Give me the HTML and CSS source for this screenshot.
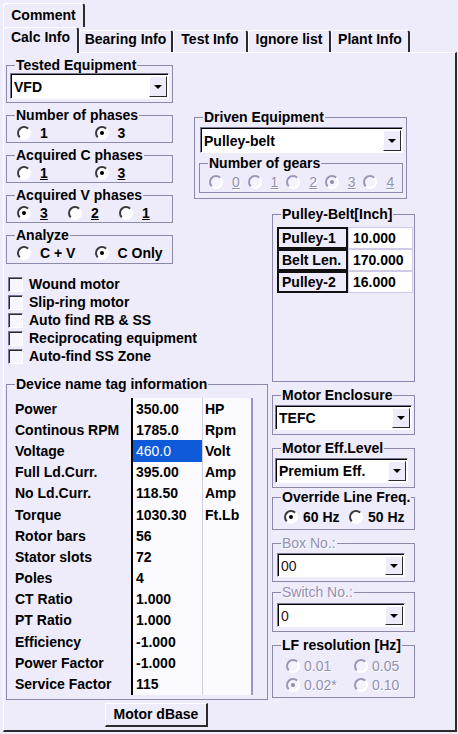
FILE: index.html
```html
<!DOCTYPE html>
<html lang="en">
<head>
    <meta charset="UTF-8">
    <title>Calc Info</title>
    <link rel="stylesheet" href="styles.css">
</head>
<body>

    <!-- Tab strip -->
    <div class="tabs">
        <div class="tab-row">
            <div class="tab tab-comment">Comment</div>
        </div>
        <div class="tab-row tab-row-main">
            <div class="tab active w-calc">Calc Info</div>
            <div class="tab w-bearing">Bearing Info</div>
            <div class="tab w-test">Test Info</div>
            <div class="tab w-ignore">Ignore list</div>
            <div class="tab w-plant">Plant Info</div>
        </div>
    </div>

    <div class="panel">

        <!-- Left stack -->
        <div class="stack">
            <fieldset class="group">
                <legend>Tested Equipment</legend>
                <div class="gbody b-tested">
                    <div class="combo"><span class="combo-text">VFD</span><span class="combo-btn"><i class="arrow"></i></span></div>
                </div>
            </fieldset>

            <fieldset class="group spaced">
                <legend>Number of phases</legend>
                <div class="opts">
                    <span class="opt w78"><i class="radio"></i>1</span>
                    <span class="opt w78"><i class="radio on"></i>3</span>
                </div>
            </fieldset>

            <fieldset class="group spaced">
                <legend>Acquired C phases</legend>
                <div class="opts">
                    <span class="opt w78"><i class="radio"></i><u>1</u></span>
                    <span class="opt w78"><i class="radio on"></i><u>3</u></span>
                </div>
            </fieldset>

            <fieldset class="group spaced">
                <legend>Acquired V phases</legend>
                <div class="opts">
                    <span class="opt w51"><i class="radio on"></i><u>3</u></span>
                    <span class="opt w51"><i class="radio"></i><u>2</u></span>
                    <span class="opt w51"><i class="radio"></i><u>1</u></span>
                </div>
            </fieldset>

            <fieldset class="group spaced">
                <legend>Analyze</legend>
                <div class="opts tall">
                    <span class="opt w79"><i class="radio"></i>C + V</span>
                    <span class="opt w79"><i class="radio on"></i>C Only</span>
                </div>
            </fieldset>

            <div class="checks">
                <div class="check-row"><i class="cbox"></i>Wound motor</div>
                <div class="check-row"><i class="cbox"></i>Slip-ring motor</div>
                <div class="check-row"><i class="cbox"></i>Auto find RB &amp; SS</div>
                <div class="check-row"><i class="cbox"></i>Reciprocating equipment</div>
                <div class="check-row"><i class="cbox"></i>Auto-find SS Zone</div>
            </div>
        </div>

        <!-- Driven equipment -->
        <fieldset class="group driven">
            <legend>Driven Equipment</legend>
            <div class="gbody b-driven">
                <div class="combo c-driven"><span class="combo-text">Pulley-belt</span><span class="combo-btn"><i class="arrow"></i></span></div>
                <fieldset class="group gears">
                    <legend>Number of gears</legend>
                    <div class="opts gear-opts dis">
                        <span class="opt w39"><i class="radio off"></i><u>0</u></span>
                        <span class="opt w39"><i class="radio off"></i><u>1</u></span>
                        <span class="opt w39"><i class="radio off"></i><u>2</u></span>
                        <span class="opt w39"><i class="radio off on"></i><u>3</u></span>
                        <span class="opt w39"><i class="radio off"></i><u>4</u></span>
                    </div>
                </fieldset>
            </div>
        </fieldset>

        <!-- Device name tag -->
        <div class="device">
            <fieldset class="group">
                <legend>Device name tag information</legend>
                <div class="gbody b-device">
                    <table class="tag-table">
                        <tr><td class="c-name">Power</td><td class="c-val">350.00</td><td class="c-unit">HP</td></tr>
                        <tr><td class="c-name">Continous RPM</td><td class="c-val">1785.0</td><td class="c-unit">Rpm</td></tr>
                        <tr><td class="c-name">Voltage</td><td class="c-val sel">460.0</td><td class="c-unit">Volt</td></tr>
                        <tr><td class="c-name">Full Ld.Curr.</td><td class="c-val">395.00</td><td class="c-unit">Amp</td></tr>
                        <tr><td class="c-name">No Ld.Curr.</td><td class="c-val">118.50</td><td class="c-unit">Amp</td></tr>
                        <tr><td class="c-name">Torque</td><td class="c-val">1030.30</td><td class="c-unit">Ft.Lb</td></tr>
                        <tr><td class="c-name">Rotor bars</td><td class="c-val">56</td><td class="c-unit"></td></tr>
                        <tr><td class="c-name">Stator slots</td><td class="c-val">72</td><td class="c-unit"></td></tr>
                        <tr><td class="c-name">Poles</td><td class="c-val">4</td><td class="c-unit"></td></tr>
                        <tr><td class="c-name">CT Ratio</td><td class="c-val">1.000</td><td class="c-unit"></td></tr>
                        <tr><td class="c-name">PT Ratio</td><td class="c-val">1.000</td><td class="c-unit"></td></tr>
                        <tr><td class="c-name">Efficiency</td><td class="c-val">-1.000</td><td class="c-unit"></td></tr>
                        <tr><td class="c-name">Power Factor</td><td class="c-val">-1.000</td><td class="c-unit"></td></tr>
                        <tr><td class="c-name">Service Factor</td><td class="c-val">115</td><td class="c-unit"></td></tr>
                    </table>
                </div>
            </fieldset>
            <button type="button" class="btn">Motor dBase</button>
        </div>

        <!-- Right stack -->
        <div class="right">
            <fieldset class="group pulley">
                <legend>Pulley-Belt[Inch]</legend>
                <div class="gbody b-pulley">
                    <table class="pulley-table">
                        <tr><td class="p-name">Pulley-1</td><td class="p-val">10.000</td></tr>
                        <tr><td class="p-name">Belt Len.</td><td class="p-val">170.000</td></tr>
                        <tr><td class="p-name">Pulley-2</td><td class="p-val">16.000</td></tr>
                    </table>
                </div>
            </fieldset>

            <fieldset class="group r-gap">
                <legend>Motor Enclosure</legend>
                <div class="gbody b-motor">
                    <div class="combo c-small"><span class="combo-text">TEFC</span><span class="combo-btn"><i class="arrow"></i></span></div>
                </div>
            </fieldset>

            <fieldset class="group r-gap">
                <legend>Motor Eff.Level</legend>
                <div class="gbody b-motor">
                    <div class="combo c-small c-eff"><span class="combo-text">Premium Eff.</span><span class="combo-btn"><i class="arrow"></i></span></div>
                </div>
            </fieldset>

            <fieldset class="group r-gap1">
                <legend>Override Line Freq.</legend>
                <div class="opts freq-opts">
                    <span class="opt w65"><i class="radio on"></i>60 Hz</span>
                    <span class="opt"><i class="radio"></i>50 Hz</span>
                </div>
            </fieldset>

            <fieldset class="group r-gap">
                <legend class="dis">Box No.:</legend>
                <div class="gbody b-box">
                    <div class="combo c-box"><span class="combo-text thin">00</span><span class="combo-btn"><i class="arrow"></i></span></div>
                </div>
            </fieldset>

            <fieldset class="group r-gap2">
                <legend class="dis">Switch No.:</legend>
                <div class="gbody b-box b-switch">
                    <div class="combo c-box"><span class="combo-text thin">0</span><span class="combo-btn"><i class="arrow"></i></span></div>
                </div>
            </fieldset>

            <fieldset class="group r-gap">
                <legend>LF resolution [Hz]</legend>
                <div class="lf-grid dis">
                    <span class="opt"><i class="radio off"></i>0.01</span>
                    <span class="opt"><i class="radio off"></i>0.05</span>
                    <span class="opt"><i class="radio off on"></i>0.02*</span>
                    <span class="opt"><i class="radio off"></i>0.10</span>
                </div>
            </fieldset>
        </div>

    </div>

</body>
</html>
```

FILE: styles.css
```css
/* Base */
* {
    box-sizing: border-box;
}

body {
    margin: 0;
    width: 458px;
    height: 734px;
    overflow: hidden;
    background: #eeebfb;
    color: #000;
    font-family: "Liberation Sans", Arial, sans-serif;
    font-weight: bold;
    font-size: 14px;
    line-height: 16px;
}

u {
    text-decoration: underline;
}

/* Tabs */
.tabs {
    padding: 3px 0 0 3px;
}

.tab-row {
    display: flex;
    align-items: flex-end;
}

.tab-row-main {
    height: 25px;
}

.tab {
    height: 22px;
    padding-top: 0;
    text-align: center;
    white-space: nowrap;
    border-top: 1px solid #fff;
    border-left: 1px solid #fff;
    border-right: 2px solid #2b2b2b;
    border-radius: 3px 3px 0 0;
}

.tab-comment {
    width: 82px;
    height: 24px;
    padding-top: 3px;
}

.tab.active {
    position: relative;
    z-index: 1;
    height: 26px;
    padding-top: 1px;
    margin-bottom: -1px;
    background: #eeebfb;
}

.w-calc { width: 76px; }
.w-bearing { width: 94px; }
.w-test { width: 75px; }
.w-ignore { width: 83px; }
.w-plant { width: 79px; }

/* Panel */
.panel {
    margin-left: 3px;
    width: 454px;
    height: 680px;
    padding: 4px 0 0 2px;
    border-top: 1px solid #fff;
    border-left: 1px solid #fff;
    border-right: 2px solid #2b2b2b;
    border-bottom: 2px solid #2b2b2b;
    display: grid;
    grid-template-columns: 167px 21px 74px 4px 144px;
    grid-template-rows: 143px 176px auto;
    grid-template-areas:
        "stack . driven driven driven"
        "stack . . . right"
        "device device device . right";
    align-items: start;
}

/* Group boxes */
.group {
    margin: 0;
    padding: 0;
    min-width: 0;
    border: 1px solid #8d89ad;
}

.group legend {
    margin-left: 8px;
    padding: 0 1px;
    line-height: 16px;
    white-space: nowrap;
}

.stack {
    grid-area: stack;
    width: 167px;
}

.group.driven {
    grid-area: driven;
    width: 213px;
    margin-top: 52px;
}

.device {
    grid-area: device;
}

.right {
    grid-area: right;
    width: 143px;
}

.spaced {
    margin-top: 4px;
}

.b-tested {
    padding: 0 3px 3px;
}

.b-driven {
    padding: 2px 3px 5px 4px;
}

.c-driven {
    margin-left: 1px;
}

.gears {
    margin-top: 2px;
}

/* Combo boxes */
.combo {
    display: flex;
    align-items: center;
    height: 26px;
    padding-left: 3px;
    background: #fff;
    border: 1px solid;
    border-color: #7a7894 #fff #fff #7a7894;
    box-shadow: inset 1px 1px 0 #000;
}

.combo-text {
    flex: 1;
    white-space: nowrap;
    overflow: hidden;
    padding-top: 1px;
}

.combo-text.thin {
    font-weight: normal;
    color: #2a1428;
}

.combo-btn {
    align-self: stretch;
    width: 18px;
    margin: 2px 1px 1px 0;
    display: flex;
    align-items: center;
    justify-content: center;
    background: #eeebfb;
    border: 1px solid;
    border-color: #fff #2b2b2b #2b2b2b #fff;
}

.arrow {
    width: 0;
    height: 0;
    border-left: 4px solid transparent;
    border-right: 4px solid transparent;
    border-top: 4px solid #000;
}

.c-small {
    height: 25px;
}

.c-eff {
    width: 133px;
}

.c-box {
    width: 128px;
    height: 24px;
}

/* Radio buttons */
.opts {
    display: flex;
    align-items: center;
    height: 19px;
    padding-left: 10px;
}

.opts.tall {
    height: 20px;
}

.opt {
    display: inline-flex;
    align-items: center;
    white-space: nowrap;
}

.w78 { width: 78px; }
.w79 { width: 79px; }
.w51 { width: 51px; }
.w39 { width: 39px; }
.w65 { width: 65px; }

.radio {
    position: relative;
    flex: none;
    width: 14px;
    height: 14px;
    margin-right: 9px;
    border-radius: 50%;
    border: 2px solid;
    border-color: #3a3a3a #fff #fff #3a3a3a;
    background: #fff;
}

.radio.on::after {
    content: "";
    position: absolute;
    left: 3px;
    top: 3px;
    width: 4px;
    height: 4px;
    border-radius: 50%;
    background: #000;
}

.radio.off {
    border-color: #9a96b4 #fff #fff #9a96b4;
    background: #f4f2fd;
}

.radio.off.on::after {
    background: #8f8bab;
}

.dis {
    color: #9490b0;
    font-weight: normal;
    text-shadow: 1px 1px 0 #fff;
}

.gear-opts {
    height: 21px;
    padding-left: 9px;
}

.gear-opts .radio {
    margin-right: 9px;
}

.freq-opts {
    height: 23px;
    padding-left: 11px;
    margin-bottom: 1px;
}

.freq-opts .radio {
    margin-right: 5px;
}

.lf-grid {
    display: grid;
    grid-template-columns: 68px 60px;
    grid-auto-rows: 19px;
    align-items: center;
    padding: 3px 0 3px 13px;
}

.lf-grid .radio {
    margin-right: 4px;
}

/* Checkboxes */
.checks {
    margin-top: 11px;
    padding-left: 2px;
}

.check-row {
    display: flex;
    align-items: center;
    height: 18px;
    white-space: nowrap;
}

.cbox {
    flex: none;
    width: 15px;
    height: 15px;
    margin-right: 6px;
    background: #f7f6fe;
    border: 1px solid;
    border-color: #7a7894 #fff #fff #7a7894;
    box-shadow: inset 1px 1px 0 #2b2b2b;
}

/* Device name tag table */
.b-device {
    padding: 6px 0 4px 6px;
}

.tag-table {
    width: 240px;
    border-collapse: separate;
    border-spacing: 0;
    table-layout: fixed;
}

.tag-table tr {
    height: 21.2px;
}

.tag-table td {
    padding: 0;
    white-space: nowrap;
}

.c-name {
    width: 118px;
    padding-left: 2px !important;
}

.c-val {
    width: 71px;
    padding-left: 3px !important;
    background: #fbfaff;
    border-left: 2px solid #000;
}

.c-val.sel {
    background: #0f5ad8;
    color: #fff;
    font-weight: normal;
}

.c-unit {
    width: 51px;
    padding-left: 2px !important;
    background: #fbfaff;
    border-left: 1px solid #cfcde2;
    border-right: 2px solid #9896c8;
}

.btn {
    display: block;
    margin: 3px 0 0 99px;
    width: 103px;
    height: 24px;
    padding: 0;
    font: inherit;
    color: #000;
    background: #eeebfb;
    border-top: 1px solid #fff;
    border-left: 1px solid #fff;
    border-right: 2px solid #2b2b2b;
    border-bottom: 2px solid #2b2b2b;
}

/* Right column */
.group.pulley {
    margin-top: 6px;
}

.b-pulley {
    padding: 5px 0 88px 4px;
}

.pulley-table {
    width: 136px;
    border-collapse: separate;
    border-spacing: 0;
    table-layout: fixed;
}

.pulley-table td {
    height: 22px;
    padding: 0;
    white-space: nowrap;
}

.p-name {
    width: 71px;
    padding-left: 3px !important;
    border: 2px solid #111;
}

.p-val {
    padding-left: 4px !important;
    background: #fff;
    border: 1px solid #cfcbe6;
}

.r-gap {
    margin-top: 5px;
}

.r-gap1 {
    margin-top: 1px;
}

.r-gap2 {
    margin-top: 2px;
}

.b-motor {
    padding: 2px 2px 4px 2px;
}

.b-box {
    padding: 2px 0 4px 4px;
}

.b-switch {
    padding-top: 3px;
}
```
